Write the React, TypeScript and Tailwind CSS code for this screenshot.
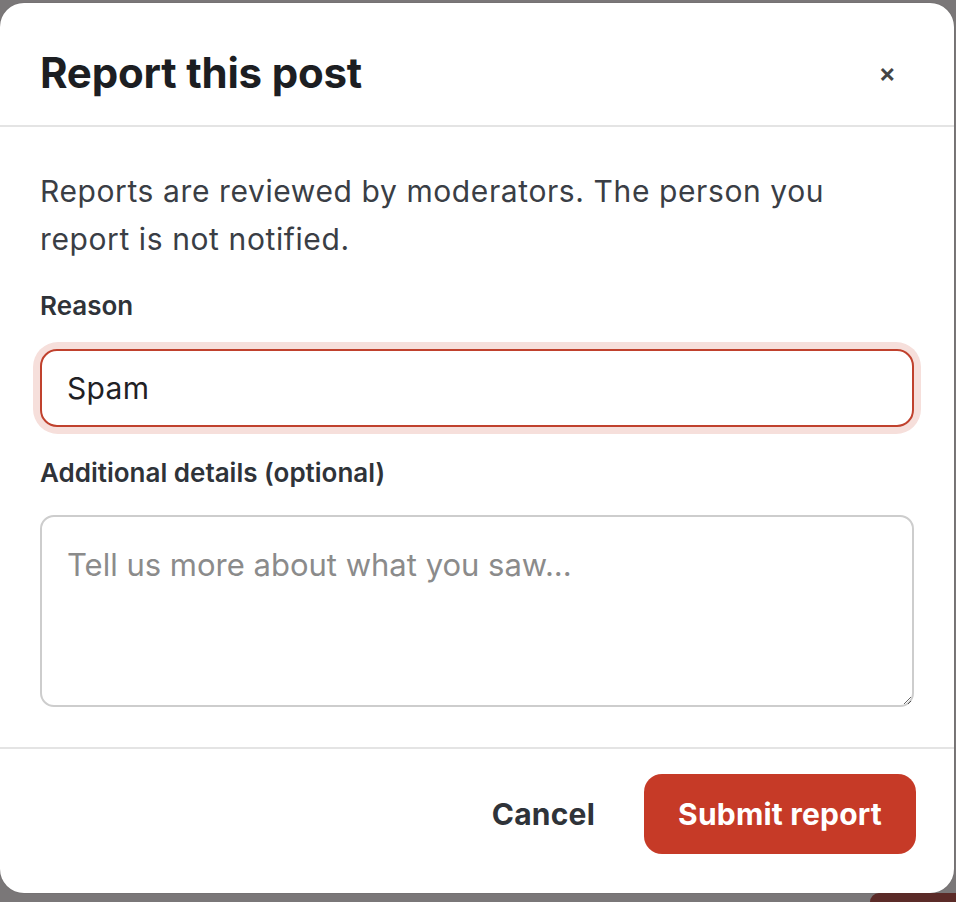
import React from "react";

const ReportModal = () => {
  return (
    <div className="w-[954px] h-[890px] bg-white rounded-[24px] flex flex-col shadow-[0_0_0_1px_rgba(0,0,0,0.04)]">
      {/* Header */}
      <div className="h-[124px] shrink-0 flex items-center justify-between pl-[40px] pr-[58px] pt-[18px] border-b-2 border-[#e4e4e4]">
        <h2 className="text-[42px] leading-[52px] font-bold text-[#1c1e22] tracking-[-0.2px]">
          Report this post
        </h2>
        <button className="text-[26px] leading-none text-[#444] font-semibold">×</button>
      </div>

      {/* Body */}
      <div className="px-[40px] pt-[40px] pb-[40px] border-b-2 border-[#e4e4e4]">
        <p className="text-[30px] leading-[48px] tracking-[0.6px] text-[#3a3e45] w-[820px]">
          Reports are reviewed by moderators. The person you report is not notified.
        </p>

        <label className="block mt-[26px] text-[26px] leading-[34px] font-semibold text-[#2f3339]">
          Reason
        </label>
        <div className="mt-[26px] rounded-[18px] ring-[7px] ring-[#f6dfdb]">
          <input
            defaultValue="Spam"
            className="w-full h-[78px] rounded-[17px] border-2 border-[#c0412d] bg-white px-[25px] text-[30px] tracking-[0.3px] text-[#1f2125] outline-none"
          />
        </div>

        <label className="block mt-[29px] text-[26px] leading-[34px] font-semibold text-[#2f3339]">
          Additional details (optional)
        </label>
        <textarea
          placeholder="Tell us more about what you saw..."
          className="block mt-[25px] w-full h-[192px] rounded-[14px] border-2 border-[#cdcdcd] px-[25px] py-[26px] text-[31px] leading-[44px] text-[#1f2125] placeholder:text-[#8b8b8b] outline-none resize-y"
        />
      </div>

      {/* Footer */}
      <div className="flex-1 flex items-start justify-end gap-[49px] pr-[38px] pt-[25px]">
        <button className="h-[80px] text-[30px] tracking-[0.2px] font-bold text-[#2f3339]">Cancel</button>
        <button className="h-[80px] w-[272px] rounded-[18px] bg-[#c63a27] text-[30px] tracking-[0.2px] font-bold text-white">
          Submit report
        </button>
      </div>
    </div>
  );
};

const App = () => {
  return (
    <div
      className="w-[956px] h-[902px] bg-[#7a7778] flex flex-col"
      style={{ fontFamily: "Inter, 'Noto Sans', sans-serif" }}
    >
      <div className="pt-[3px]">
        <ReportModal />
      </div>
      <div className="flex-1 flex">
        <div className="flex-1" />
        <div className="w-[86px] bg-[#5b2b28] rounded-tl-[30px]" />
      </div>
    </div>
  );
};

export default App;
